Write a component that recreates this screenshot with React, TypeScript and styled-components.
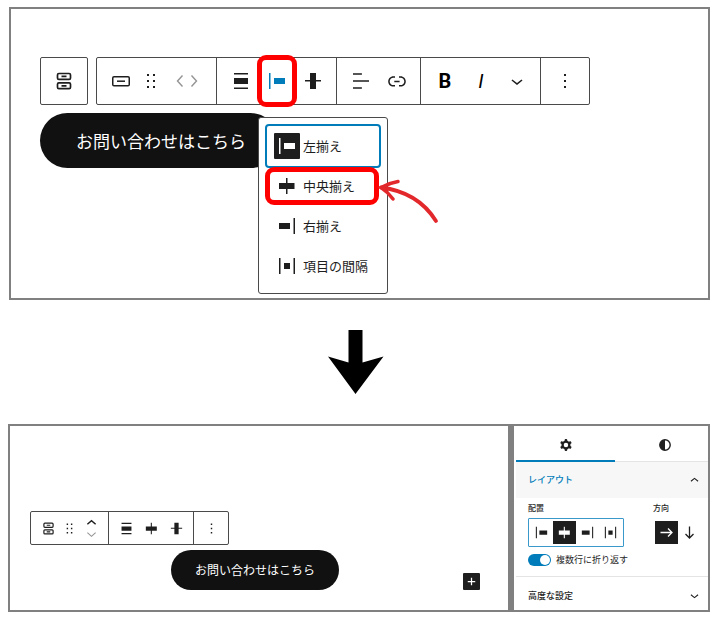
import React from "react";
import styled, { createGlobalStyle, css } from "styled-components";

const INK = "#1e1e1e";
const LINE = "#4a4a4a";
const FRAME = "#808080";
const BLUE = "#007cba";
const RED = "#ff0000";

const GlobalStyle = createGlobalStyle`
  *, *::before, *::after { box-sizing: border-box; }
  body {
    margin: 0;
    background: #fff;
    color: ${INK};
    font-family: "Noto Sans CJK JP", "Noto Sans", sans-serif;
  }
  button { font: inherit; color: inherit; }
`;

/* ---------- page ---------- */

const Page = styled.main`
  display: flex;
  flex-direction: column;
  padding: 7px 8px 22px;
`;

const BeforeFrame = styled.section`
  margin-left: 1px;
  padding: 48px 29px 130px;
  border: 2px solid ${FRAME};
`;

const AfterFrame = styled.section`
  display: flex;
  border: 2px solid ${FRAME};
`;

const StepArrow = styled.svg`
  display: block;
  align-self: center;
  width: 56px;
  height: 64px;
  margin: 30px 7px 30px 0;
`;

/* ---------- toolbars ---------- */

const ToolbarRow = styled.div`
  display: flex;
  gap: 8px;
`;

const Toolbar = styled.div<{ $compact?: boolean }>`
  display: flex;
  width: max-content;
  height: ${(p) => (p.$compact ? 34 : 48)}px;
  border: 1px solid ${LINE};
  border-radius: 2px;
  background: #fff;
`;

const Group = styled.div<{ $compact?: boolean }>`
  display: flex;
  align-items: stretch;
  padding: ${(p) => (p.$compact ? "0 4px 0 5px" : "0 5px 0 6px")};
  border-right: 1px solid ${LINE};
  &:last-child {
    padding-right: ${(p) => (p.$compact ? 4 : 6)}px;
    border-right: 0;
  }
`;

const ToolButton = styled.button<{ $width?: number; $active?: boolean }>`
  display: flex;
  align-items: center;
  justify-content: center;
  width: ${(p) => p.$width ?? 36}px;
  padding: 0;
  border: 0;
  background: none;
  color: ${(p) => (p.$active ? BLUE : INK)};
`;

const Letter = styled.span<{ $italic?: boolean }>`
  font-family: Roboto, sans-serif;
  font-size: 20px;
  line-height: 24px;
  font-weight: ${(p) => (p.$italic ? 400 : 700)};
  font-style: ${(p) => (p.$italic ? "italic" : "normal")};
  color: #000;
`;

const Movers = styled.div<{ $vertical?: boolean }>`
  display: flex;
  flex-direction: ${(p) => (p.$vertical ? "column" : "row")};
  align-items: center;
  justify-content: center;
  width: ${(p) => (p.$vertical ? 26 : 48)}px;
`;

const MoverButton = styled.button<{ $dim?: boolean }>`
  display: flex;
  align-items: center;
  justify-content: center;
  width: 14px;
  height: 12px;
  padding: 0;
  border: 0;
  background: none;
  color: ${(p) => (p.$dim ? "#949494" : INK)};
`;

const Anchor = styled.div`
  position: relative;
  display: flex;
`;

const highlight = css`
  position: absolute;
  border: 5px solid ${RED};
  border-radius: 9px;
  pointer-events: none;
`;

const ToolHighlight = styled.span`
  ${highlight}
  inset: -3px -2px;
`;

const RowHighlight = styled.span`
  ${highlight}
  inset: 1px 0 1px -2px;
`;

/* ---------- alignment menu ---------- */

const Menu = styled.div`
  position: absolute;
  z-index: 2;
  top: 59px;
  left: -1px;
  width: 130px;
  padding: 8px 8px 7px;
  border: 1px solid ${LINE};
  border-radius: 3px;
  background: #fff;
`;

const MenuRow = styled.div`
  position: relative;
`;

const MenuItem = styled.button<{ $focused?: boolean }>`
  display: flex;
  align-items: center;
  gap: 3px;
  width: 100%;
  height: 40px;
  padding: 0 0 0 7px;
  border: 0;
  border-radius: 2px;
  background: none;
  font-size: 13px;
  line-height: 20px;
  white-space: nowrap;
  outline: ${(p) => (p.$focused ? `2px solid ${BLUE}` : "none")};
`;

const MenuIcon = styled.span<{ $selected?: boolean }>`
  display: flex;
  align-items: center;
  justify-content: center;
  width: 26px;
  height: 26px;
  border-radius: 1px;
  background: ${(p) => (p.$selected ? INK : "transparent")};
  color: ${(p) => (p.$selected ? "#fff" : INK)};
`;

const Pointer = styled.svg`
  position: absolute;
  top: 10px;
  left: 111px;
  width: 64px;
  height: 50px;
  pointer-events: none;
`;

/* ---------- content blocks ---------- */

const Pill = styled.a<{ $small?: boolean }>`
  display: flex;
  align-items: center;
  width: max-content;
  height: ${(p) => (p.$small ? 40 : 55)}px;
  padding: ${(p) => (p.$small ? "0 24px" : "0 32px 0 36px")};
  border-radius: 28px;
  background: #111;
  color: #fff;
  font-size: ${(p) => (p.$small ? 12 : 17)}px;
  line-height: 24px;
  text-decoration: none;
`;

const Stack = styled.div`
  margin-top: 8px;
`;

const Editor = styled.div`
  flex: 1;
  min-width: 0;
  padding: 85px 28px 20px 20px;
`;

const ButtonsBlock = styled.div`
  display: grid;
  grid-template-columns: 1fr auto 1fr;
  align-items: end;
  margin-top: 5px;
`;

const AddButton = styled.button`
  display: flex;
  align-items: center;
  justify-content: center;
  grid-column: 3;
  justify-self: end;
  width: 17px;
  height: 17px;
  padding: 0;
  border: 0;
  border-radius: 1px;
  background: ${INK};
  color: #fff;
`;

const CenterCell = styled.div`
  grid-column: 2;
`;

/* ---------- sidebar ---------- */

const Sidebar = styled.aside`
  flex: none;
  width: 200px;
  padding-left: 2px;
  border-left: 6px solid ${FRAME};
  overflow: hidden;
`;

const Tabs = styled.div`
  display: flex;
  height: 36px;
  box-shadow: inset 0 -1px 0 #e4e4e4;
`;

const Tab = styled.button<{ $active?: boolean }>`
  display: flex;
  align-items: center;
  justify-content: center;
  flex: none;
  width: 99px;
  padding: 4px 0 0;
  border: 0;
  border-bottom: 2px solid ${(p) => (p.$active ? BLUE : "transparent")};
  background: none;
`;

const SectionHeader = styled.button<{ $open?: boolean }>`
  display: flex;
  align-items: center;
  justify-content: space-between;
  width: 100%;
  height: ${(p) => (p.$open ? 36 : 33)}px;
  padding: ${(p) => (p.$open ? "0 5px 0 12px" : "4px 5px 0 12px")};
  border: 0;
  background: ${(p) => (p.$open ? "#f7f7f7" : "#fff")};
  color: ${INK};
  font-size: 9px;
  font-weight: 500;
  line-height: 16px;
`;

const HeaderText = styled.span<{ $open?: boolean }>`
  color: ${(p) => (p.$open ? BLUE : INK)};
`;

const SectionBody = styled.div`
  padding: 4px 5px 8px 12px;
  border-bottom: 1px solid #e4e4e4;
`;

const Fields = styled.div`
  display: flex;
  justify-content: space-between;
`;

const Field = styled.div`
  display: flex;
  flex-direction: column;
  gap: 4px;
`;

const FieldLabel = styled.span`
  font-size: 8px;
  font-weight: 500;
  line-height: 12px;
`;

const Options = styled.div<{ $focused?: boolean }>`
  display: flex;
  padding: 2px 1px;
  border: 1px solid ${(p) => (p.$focused ? "#3a98cb" : "transparent")};
  border-radius: 1px;
`;

const Option = styled.button<{ $selected?: boolean }>`
  display: flex;
  align-items: center;
  justify-content: center;
  width: 23px;
  height: 23px;
  padding: 0;
  border: 0;
  background: ${(p) => (p.$selected ? INK : "transparent")};
  color: ${(p) => (p.$selected ? "#fff" : INK)};
`;

const SwitchRow = styled.label`
  display: flex;
  align-items: center;
  gap: 5px;
  margin-top: 5px;
  font-size: 9px;
  line-height: 16px;
`;

const Switch = styled.input`
  appearance: none;
  display: flex;
  justify-content: flex-end;
  width: 23px;
  height: 12px;
  margin: 0;
  padding: 1px;
  border-radius: 6px;
  background: ${BLUE};
  &::before {
    content: "";
    width: 10px;
    height: 10px;
    border-radius: 50%;
    background: #fff;
  }
  &:not(:checked) {
    justify-content: flex-start;
    background: #949494;
  }
`;

/* ---------- icons ---------- */

const Svg = styled.svg<{ $size: number }>`
  display: block;
  flex: none;
  width: ${(p) => p.$size}px;
  height: ${(p) => p.$size}px;
  fill: currentColor;
`;

const PATHS = {
  drag: "M8 7h2V5H8v2zm0 6h2v-2H8v2zm0 6h2v-2H8v2zm6-14v2h2V5h-2zm0 8h2v-2h-2v2zm0 6h2v-2h-2v2z",
  stretch: "M5 4h14v1.5H5V4zM5 18.5h14V20H5v-1.5zM5 9h14v6H5V9z",
  left: "M9 9v6h11V9H9zM4 20h1.5V4H4v16z",
  center: "M12.5 15v5H11v-5H4V9h7V4h1.5v5h7v6h-7z",
  right: "M4 15h11V9H4v6zM18.5 4v16H20V4h-1.5z",
  between: "M9 15h6V9H9v6zm-5 5h1.5V4H4v16zM18.5 4v16H20V4h-1.5z",
  middle: "M20 11h-5V4H9v7H4v1.5h5V20h6v-7.5h5z",
  text: "M4 19.8h8.9v-1.5H4v1.5zm8.9-15.6H4v1.5h8.9V4.2zm-8.9 7v1.5h16v-1.5H4z",
  link: "M15.6 7.2H14v1.5h1.6c2 0 3.7 1.7 3.7 3.7s-1.7 3.7-3.7 3.7H14v1.5h1.6c2.8 0 5.2-2.3 5.2-5.2 0-2.9-2.3-5.2-5.2-5.2zM4.7 12.4c0-2 1.7-3.7 3.7-3.7H10V7.2H8.4c-2.9 0-5.2 2.3-5.2 5.2 0 2.9 2.3 5.2 5.2 5.2H10v-1.5H8.4c-2 0-3.7-1.7-3.7-3.7zm4.6.9h5.3v-1.5H9.3v1.5z",
  down: "M17.5 11.6L12 16l-5.5-4.4.9-1.2L12 14l4.5-3.6 1 1.2z",
  up: "M6.5 12.4L12 8l5.5 4.4-.9 1.2L12 10l-4.5 3.6-1-1.2z",
  more: "M13 19h-2v-2h2v2zm0-6h-2v-2h2v2zm0-6h-2V5h2v2z",
  plus: "M11 12.5V18h2v-5h5v-2h-5V6h-2v5H6v2h5z",
  cog: "M10.289 4.836A1 1 0 0111.275 4h1.306a1 1 0 01.987.836l.244 1.466c.787.26 1.503.679 2.108 1.218l1.393-.522a1 1 0 011.216.437l.653 1.13a1 1 0 01-.23 1.273l-1.148.944a6.025 6.025 0 010 2.435l1.149.946a1 1 0 01.23 1.272l-.653 1.13a1 1 0 01-1.216.437l-1.394-.522c-.605.54-1.32.958-2.108 1.218l-.244 1.466a1 1 0 01-.987.836h-1.306a1 1 0 01-.986-.836l-.244-1.466a5.995 5.995 0 01-2.108-1.218l-1.394.522a1 1 0 01-1.217-.436l-.653-1.131a1 1 0 01.23-1.272l1.149-.946a6.026 6.026 0 010-2.435l-1.148-.944a1 1 0 01-.23-1.272l.653-1.131a1 1 0 011.217-.437l1.393.522a5.994 5.994 0 012.108-1.218l.244-1.466zM14.929 12a3 3 0 11-6 0 3 3 0 016 0z",
};

type IconName = keyof typeof PATHS;

const Icon = ({ name, size = 24 }: { name: IconName; size?: number }) => (
  <Svg $size={size} viewBox="0 0 24 24" aria-hidden="true">
    <path d={PATHS[name]} fillRule="evenodd" />
  </Svg>
);

const ButtonsIcon = ({ size = 24 }: { size?: number }) => (
  <Svg $size={size} viewBox="0 0 24 24" aria-hidden="true">
    <g fill="none" stroke="currentColor" strokeWidth="1.7">
      <rect x="5.5" y="4.5" width="13" height="5.8" rx="1.4" />
      <rect x="5.5" y="13.9" width="13" height="5.8" rx="1.4" />
      <path d="M9.5 7.4h5M9.5 16.8h5" />
    </g>
  </Svg>
);

const ButtonIcon = () => (
  <Svg $size={24} viewBox="0 0 24 24" aria-hidden="true">
    <g fill="none" stroke="currentColor" strokeWidth="1.5">
      <rect x="3.75" y="7.75" width="16.5" height="9" rx="1.25" />
      <path d="M8 12.2h8" />
    </g>
  </Svg>
);

const Chevron = ({ d, size, width }: { d: string; size: number; width: number }) => (
  <Svg $size={size} viewBox="0 0 12 12" aria-hidden="true">
    <path d={d} fill="none" stroke="currentColor" strokeWidth={width} />
  </Svg>
);

const Contrast = () => (
  <Svg $size={12} viewBox="0 0 12 12" aria-hidden="true">
    <circle cx="6" cy="6" r="5.2" fill="none" stroke="currentColor" strokeWidth="1.4" />
    <path d="M6 .8a5.2 5.2 0 0 0 0 10.4z" />
  </Svg>
);

const Arrow = ({ d }: { d: string }) => (
  <Svg $size={15} viewBox="0 0 15 15" aria-hidden="true">
    <path d={d} fill="none" stroke="currentColor" strokeWidth="1.3" />
  </Svg>
);

/* ---------- data ---------- */

const ALIGNMENTS: { icon: IconName; label: string }[] = [
  { icon: "left", label: "左揃え" },
  { icon: "center", label: "中央揃え" },
  { icon: "right", label: "右揃え" },
  { icon: "between", label: "項目の間隔" },
];

const AlignmentMenu = () => (
  <Menu role="menu" aria-label="配置">
    {ALIGNMENTS.map(({ icon, label }, i) => (
      <MenuRow key={icon}>
        <MenuItem role="menuitemradio" aria-checked={i === 0} $focused={i === 0}>
          <MenuIcon $selected={i === 0}>
            <Icon name={icon} />
          </MenuIcon>
          {label}
        </MenuItem>
        {icon === "center" && (
          <>
            <RowHighlight />
            <Pointer viewBox="0 0 64 50" aria-hidden="true">
              <g fill="none" stroke="#e3282c" strokeLinecap="round">
                <path d="M3 11.500Q40 16 58 45" strokeWidth="3.8" />
                <path d="M20 5.500Q11 7 3 11.500Q10 16 15 23" strokeWidth="3.4" />
              </g>
            </Pointer>
          </>
        )}
      </MenuRow>
    ))}
  </Menu>
);

const Before = () => (
  <BeforeFrame>
    <ToolbarRow>
      <Toolbar>
        <ToolButton $width={46} aria-label="親ブロックを選択">
          <ButtonsIcon />
        </ToolButton>
      </Toolbar>
      <Toolbar role="toolbar" aria-label="ブロックツール">
        <Group>
          <ToolButton aria-label="ボタン"><ButtonIcon /></ToolButton>
          <ToolButton $width={24} aria-label="ドラッグ"><Icon name="drag" /></ToolButton>
          <Movers>
            <MoverButton $dim aria-label="左に移動">
              <Chevron d="M8.500 .5L3.500 6l5 5.500" size={12} width={1.4} />
            </MoverButton>
            <MoverButton $dim aria-label="右に移動">
              <Chevron d="M3.500 .5L8.500 6l-5 5.500" size={12} width={1.4} />
            </MoverButton>
          </Movers>
        </Group>
        <Group>
          <ToolButton aria-label="幅"><Icon name="stretch" /></ToolButton>
          <Anchor>
            <ToolButton $active aria-label="項目の揃え位置" aria-expanded="true">
              <Icon name="left" />
            </ToolButton>
            <ToolHighlight />
            <AlignmentMenu />
          </Anchor>
          <ToolButton aria-label="垂直配置"><Icon name="middle" /></ToolButton>
        </Group>
        <Group>
          <ToolButton aria-label="テキストの配置"><Icon name="text" /></ToolButton>
          <ToolButton aria-label="リンク"><Icon name="link" /></ToolButton>
        </Group>
        <Group>
          <ToolButton aria-label="太字"><Letter>B</Letter></ToolButton>
          <ToolButton aria-label="イタリック"><Letter $italic>I</Letter></ToolButton>
          <ToolButton aria-label="さらに表示"><Icon name="down" /></ToolButton>
        </Group>
        <Group>
          <ToolButton aria-label="オプション"><Icon name="more" /></ToolButton>
        </Group>
      </Toolbar>
    </ToolbarRow>
    <Stack>
      <Pill href="#contact">お問い合わせはこちら</Pill>
    </Stack>
  </BeforeFrame>
);

const Settings = () => (
  <Sidebar>
    <Tabs role="tablist">
      <Tab role="tab" aria-selected="true" aria-label="設定" $active>
        <Icon name="cog" size={18} />
      </Tab>
      <Tab role="tab" aria-selected="false" aria-label="スタイル">
        <Contrast />
      </Tab>
    </Tabs>
    <SectionHeader $open aria-expanded="true">
      <HeaderText $open>レイアウト</HeaderText>
      <Icon name="up" size={17} />
    </SectionHeader>
    <SectionBody>
      <Fields>
        <Field>
          <FieldLabel id="align-label">配置</FieldLabel>
          <Options $focused role="group" aria-labelledby="align-label">
            {ALIGNMENTS.map(({ icon, label }) => (
              <Option
                key={icon}
                aria-label={label}
                aria-pressed={icon === "center"}
                $selected={icon === "center"}
              >
                <Icon name={icon} size={17} />
              </Option>
            ))}
          </Options>
        </Field>
        <Field>
          <FieldLabel id="direction-label">方向</FieldLabel>
          <Options role="group" aria-labelledby="direction-label">
            <Option $selected aria-label="横" aria-pressed="true">
              <Arrow d="M1.500 7.500h11M9 3.500l4 4-4 4" />
            </Option>
            <Option aria-label="縦" aria-pressed="false">
              <Arrow d="M7.500 1.500v11M3.500 9l4 4 4-4" />
            </Option>
          </Options>
        </Field>
      </Fields>
      <SwitchRow>
        <Switch type="checkbox" role="switch" defaultChecked />
        複数行に折り返す
      </SwitchRow>
    </SectionBody>
    <SectionHeader aria-expanded="false">
      <HeaderText>高度な設定</HeaderText>
      <Icon name="down" size={17} />
    </SectionHeader>
  </Sidebar>
);

const After = () => (
  <AfterFrame>
    <Editor>
      <Toolbar $compact role="toolbar" aria-label="ブロックツール">
        <Group $compact>
          <ToolButton $width={25} aria-label="ボタン"><ButtonsIcon size={17} /></ToolButton>
          <ToolButton $width={17} aria-label="ドラッグ"><Icon name="drag" size={17} /></ToolButton>
          <Movers $vertical>
            <MoverButton aria-label="上に移動">
              <Chevron d="M1.500 8L6 4l4.500 4" size={11} width={1.5} />
            </MoverButton>
            <MoverButton $dim aria-label="下に移動">
              <Chevron d="M1.500 4L6 8l4.500-4" size={11} width={1.2} />
            </MoverButton>
          </Movers>
        </Group>
        <Group $compact>
          <ToolButton $width={25} aria-label="幅"><Icon name="stretch" size={17} /></ToolButton>
          <ToolButton $width={25} aria-label="項目の揃え位置"><Icon name="center" size={17} /></ToolButton>
          <ToolButton $width={25} aria-label="垂直配置"><Icon name="middle" size={17} /></ToolButton>
        </Group>
        <Group $compact>
          <ToolButton $width={25} aria-label="オプション"><Icon name="more" size={17} /></ToolButton>
        </Group>
      </Toolbar>
      <ButtonsBlock>
        <CenterCell>
          <Pill $small href="#contact">お問い合わせはこちら</Pill>
        </CenterCell>
        <AddButton aria-label="ブロックを追加"><Icon name="plus" size={15} /></AddButton>
      </ButtonsBlock>
    </Editor>
    <Settings />
  </AfterFrame>
);

export default function App() {
  return (
    <>
      <GlobalStyle />
      <Page>
        <Before />
        <StepArrow viewBox="0 0 56 64" aria-hidden="true">
          <path d="M20.500 0h14v32.500L55.500 26.500 27.500 64 0 26.500l20.500 6z" fill="#000" />
        </StepArrow>
        <After />
      </Page>
    </>
  );
}
